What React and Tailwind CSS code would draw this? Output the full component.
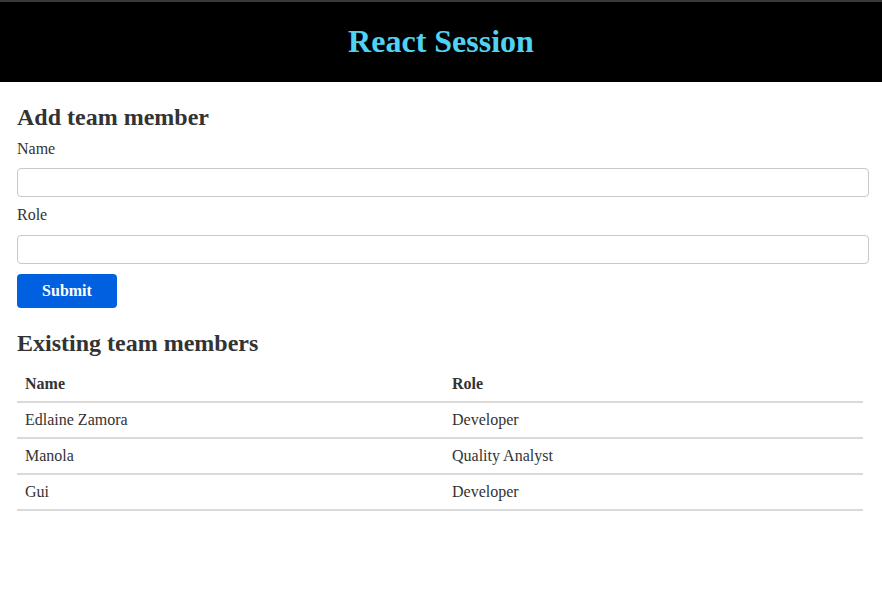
import React, { useState } from 'react';

const serif = 'font-["Liberation_Serif","Times_New_Roman",serif]';

const initialMembers = [
  { name: 'Edlaine Zamora', role: 'Developer' },
  { name: 'Manola', role: 'Quality Analyst' },
  { name: 'Gui', role: 'Developer' },
];

// ── Form ────────────────────────────────────────────────────────────────────
const MemberForm = ({ onAdd }) => {
  const [name, setName] = useState('');
  const [role, setRole] = useState('');

  const submit = (e) => {
    e.preventDefault();
    if (!name.trim()) return;
    onAdd({ name, role });
    setName('');
    setRole('');
  };

  return (
    <form onSubmit={submit}>
      <h2 className="text-[24px] font-bold leading-[28px] mt-[21px]">Add team member</h2>
      <label className="block text-[16px] leading-[18px] mt-[9px]">Name</label>
      <input
        className="block w-[852px] h-[29px] mt-[10px] border border-[#c8c8c8] rounded-[4px] px-2 outline-none"
        value={name}
        onChange={(e) => setName(e.target.value)}
      />
      <label className="block text-[16px] leading-[18px] mt-[9px]">Role</label>
      <input
        className="block w-[852px] h-[29px] mt-[11px] border border-[#c8c8c8] rounded-[4px] px-2 outline-none"
        value={role}
        onChange={(e) => setRole(e.target.value)}
      />
      <button
        type="submit"
        className="mt-[10px] w-[100px] h-[34px] rounded-[4px] bg-[#0060df] text-white font-bold text-[16px]"
      >
        Submit
      </button>
    </form>
  );
};

// ── Table ───────────────────────────────────────────────────────────────────
const MemberTable = ({ members }) => (
  <div className="w-[846px] mt-[10px]">
    <div className="grid grid-cols-[427px_1fr] h-[36px] items-center border-b-2 border-[#d9d9d9] font-bold">
      <span className="px-2">Name</span>
      <span className="px-2">Role</span>
    </div>
    {members.map((m, i) => (
      <div key={i} className="grid grid-cols-[427px_1fr] h-[36px] items-center border-b-2 border-[#d9d9d9]">
        <span className="px-2">{m.name}</span>
        <span className="px-2">{m.role}</span>
      </div>
    ))}
  </div>
);

export default function App() {
  const [members, setMembers] = useState(initialMembers);

  return (
    <div className={`min-h-[606px] bg-white text-[#333] text-[16px] ${serif}`}>
      <header className="h-[82px] bg-black border-t-2 border-[#3a3a3a] flex items-center justify-center pb-[3px]">
        <h1 className="text-[32px] font-bold text-[#4fd3f5]">React Session</h1>
      </header>
      <main className="pl-[17px]">
        <MemberForm onAdd={(m) => setMembers([...members, m])} />
        <h2 className="text-[24px] font-bold leading-[28px] mt-[21px]">Existing team members</h2>
        <MemberTable members={members} />
      </main>
    </div>
  );
}
